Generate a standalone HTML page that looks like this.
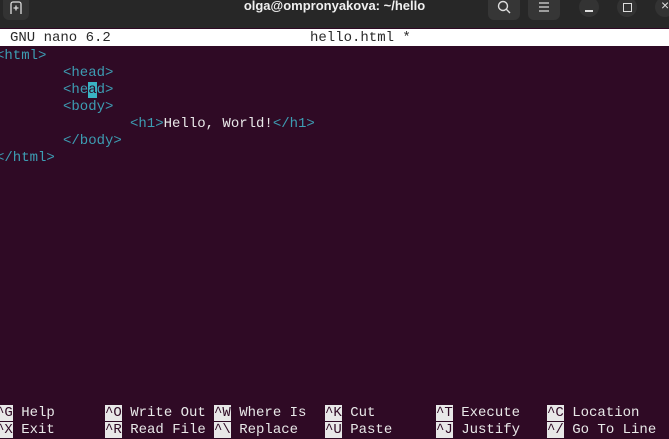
<!DOCTYPE html>
<html><head><meta charset="utf-8"><style>
*{margin:0;padding:0}
body{width:669px;height:438px;overflow:hidden;background:#2f0a25;position:relative;font-family:"Liberation Mono",monospace;font-size:14px;color:#e8e8e8}
.hdr{position:absolute;left:0;top:0;width:669px;height:28px;background:#272727}
.btn{position:absolute;top:-6px;width:32px;height:26px;background:#363636;border-radius:6px}
.circ{position:absolute;top:-3px;width:20px;height:20px;border-radius:50%;background:#333}
.title{position:absolute;left:0;width:669px;top:-2px;text-align:center;font-family:"Liberation Sans",sans-serif;font-weight:bold;font-size:13px;color:#f0f0f0}
.bar{position:absolute;left:0;top:29px;width:669px;height:17px;background:#fff;color:#2a2a2a}
.l{position:absolute;white-space:pre;height:17px;line-height:17px}
.t{color:#3d9db3}
.k{background:#e8e8e8;color:#2f0a25}
.cur{background:#3ab3c3;color:#2f0a25}
</style></head><body>
<div class="hdr">
 <div class="btn" style="left:3px;width:26px;background:#333"></div>
 <svg style="position:absolute;left:9px;top:1px" width="14" height="14" viewBox="0 0 14 14"><path d="M2 13V3a2 2 0 0 1 2-2h6a2 2 0 0 1 2 2v10" fill="none" stroke="#ddd" stroke-width="1.3"/><path d="M7 4.5v5M4.5 7h5" stroke="#ddd" stroke-width="1.3"/></svg>
 <div class="title">olga@ompronyakova: ~/hello</div>
 <div class="btn" style="left:488px"></div>
 <svg style="position:absolute;left:497px;top:0" width="14" height="14" viewBox="0 0 14 14"><circle cx="6" cy="6" r="4.5" fill="none" stroke="#ddd" stroke-width="1.4"/><path d="M9.3 9.3L13 13" stroke="#ddd" stroke-width="1.4"/></svg>
 <div class="btn" style="left:528px"></div>
 <svg style="position:absolute;left:538px;top:1px" width="12" height="12" viewBox="0 0 12 12"><path d="M1 2h10M1 6h10M1 10h10" stroke="#ddd" stroke-width="1.3"/></svg>
 <div class="circ" style="left:579px"></div>
 <div style="position:absolute;left:585px;top:10px;width:8px;height:1.5px;background:#ddd"></div>
 <div class="circ" style="left:617px"></div>
 <div style="position:absolute;left:623px;top:3px;width:7px;height:7px;border:1.3px solid #ddd"></div>
 <div class="circ" style="left:655px"></div>
 <div style="position:absolute;left:661px;top:-3px;font-family:'Liberation Sans',sans-serif;font-size:14px;color:#ddd">×</div>
</div>
<div class="bar"><div class="l" style="left:10px;top:1px">GNU nano 6.2</div><div class="l" style="left:310px;top:1px">hello.html *</div></div>
<div class="l t" style="left:-4px;top:48px">&lt;html&gt;</div>
<div class="l t" style="left:63px;top:65px">&lt;head&gt;</div>
<div class="l t" style="left:63px;top:82px">&lt;he<span class="cur">a</span>d&gt;</div>
<div class="l t" style="left:63px;top:99px">&lt;body&gt;</div>
<div class="l" style="left:130px;top:116px"><span class="t">&lt;h1&gt;</span>Hello, World!<span class="t">&lt;/h1&gt;</span></div>
<div class="l t" style="left:63px;top:133px">&lt;/body&gt;</div>
<div class="l t" style="left:-4px;top:150px">&lt;/html&gt;</div>

<div class="l" style="left:-4px;top:405px"><span class="k">^G</span> Help</div>
<div class="l" style="left:-4px;top:422px"><span class="k">^X</span> Exit</div>
<div class="l" style="left:105px;top:405px"><span class="k">^O</span> Write Out</div>
<div class="l" style="left:105px;top:422px"><span class="k">^R</span> Read File</div>
<div class="l" style="left:214px;top:405px"><span class="k">^W</span> Where Is</div>
<div class="l" style="left:214px;top:422px"><span class="k">^\</span> Replace</div>
<div class="l" style="left:325px;top:405px"><span class="k">^K</span> Cut</div>
<div class="l" style="left:325px;top:422px"><span class="k">^U</span> Paste</div>
<div class="l" style="left:436px;top:405px"><span class="k">^T</span> Execute</div>
<div class="l" style="left:436px;top:422px"><span class="k">^J</span> Justify</div>
<div class="l" style="left:547px;top:405px"><span class="k">^C</span> Location</div>
<div class="l" style="left:547px;top:422px"><span class="k">^/</span> Go To Line</div>
</body></html>
